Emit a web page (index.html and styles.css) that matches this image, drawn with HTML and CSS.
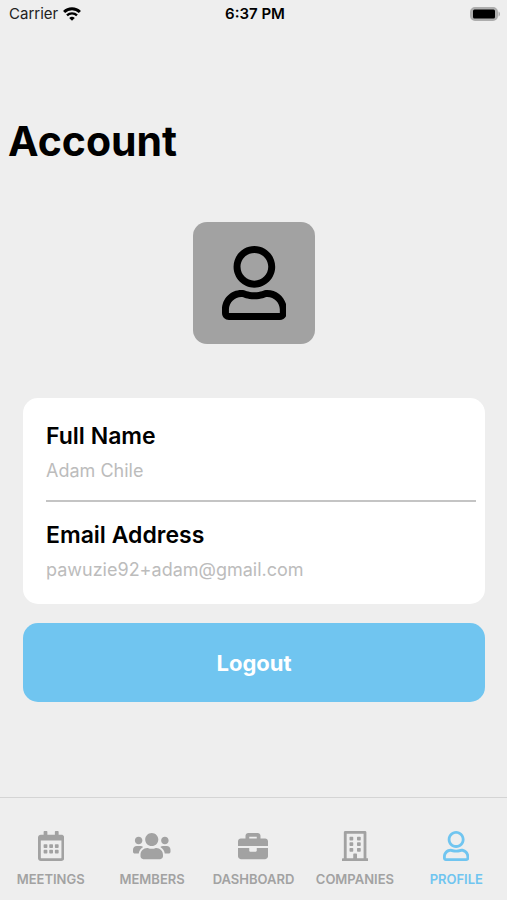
FILE: index.html
```html
<!DOCTYPE html>
<html lang="en">
<head>
    <meta charset="UTF-8">
    <meta name="viewport" content="width=device-width, initial-scale=1.0">
    <title>Account</title>
    <link rel="stylesheet" href="styles.css">
</head>
<body>
    <div class="status-bar">
        <div class="carrier">
            <span>Carrier</span>
            <svg class="wifi" viewBox="0 0 18 14" aria-hidden="true">
                <path d="M1.1 5a11.2 11.2 0 0 1 15.8 0" fill="none" stroke="currentColor" stroke-width="3"/>
                <path d="M4 8.4a7.2 7.2 0 0 1 10 0" fill="none" stroke="currentColor" stroke-width="2.4"/>
                <path d="M9 13.8 6.2 11a4 4 0 0 1 5.6 0z" fill="currentColor"/>
            </svg>
        </div>
        <div class="time">6:37 PM</div>
        <svg class="battery" viewBox="0 0 31 14" aria-hidden="true">
            <rect x="1" y="1" width="26" height="12" rx="4" fill="#adadad" stroke="#adadad" stroke-width="2"/>
            <rect x="3" y="2.5" width="22" height="9" rx="1.5" fill="#000"/>
            <path d="M28.5 4.5c2 .6 2 4.4 0 5z" fill="#adadad"/>
        </svg>
    </div>

    <main class="account">
        <h1>Account</h1>

        <div class="avatar">
            <svg viewBox="0 0 448 512" role="img" aria-label="Profile picture">
                <path d="M313.6 304c-28.7 0-42.5 16-89.6 16-47.1 0-60.8-16-89.6-16C60.2 304 0 364.2 0 438.4V464c0 26.5 21.5 48 48 48h352c26.5 0 48-21.5 48-48v-25.6c0-74.2-60.2-134.4-134.4-134.4zM400 464H48v-25.6c0-47.6 38.8-86.4 86.4-86.4 14.6 0 38.3 16 89.6 16 51.7 0 74.9-16 89.6-16 47.6 0 86.4 38.8 86.4 86.4V464zM224 288c79.5 0 144-64.5 144-144S303.5 0 224 0 80 64.5 80 144s64.5 144 144 144zm0-240c52.9 0 96 43.1 96 96s-43.1 96-96 96-96-43.1-96-96 43.1-96 96-96z"/>
            </svg>
        </div>

        <dl class="card">
            <div class="field">
                <dt>Full Name</dt>
                <dd>Adam Chile</dd>
            </div>
            <div class="field">
                <dt>Email Address</dt>
                <dd>pawuzie92+adam@gmail.com</dd>
            </div>
        </dl>

        <button type="button" class="logout">Logout</button>
    </main>

    <nav class="tab-bar">
        <a href="#meetings" class="tab">
            <svg viewBox="0 0 448 512" aria-hidden="true">
                <path d="M148 288h-40c-6.6 0-12-5.4-12-12v-40c0-6.6 5.4-12 12-12h40c6.6 0 12 5.4 12 12v40c0 6.6-5.4 12-12 12zm108-12v-40c0-6.6-5.4-12-12-12h-40c-6.6 0-12 5.4-12 12v40c0 6.6 5.4 12 12 12h40c6.6 0 12-5.4 12-12zm96 0v-40c0-6.6-5.4-12-12-12h-40c-6.6 0-12 5.4-12 12v40c0 6.6 5.4 12 12 12h40c6.6 0 12-5.4 12-12zm-96 96v-40c0-6.6-5.4-12-12-12h-40c-6.6 0-12 5.4-12 12v40c0 6.6 5.4 12 12 12h40c6.6 0 12-5.4 12-12zm-96 0v-40c0-6.6-5.4-12-12-12h-40c-6.6 0-12 5.4-12 12v40c0 6.6 5.4 12 12 12h40c6.6 0 12-5.4 12-12zm192 0v-40c0-6.6-5.4-12-12-12h-40c-6.6 0-12 5.4-12 12v40c0 6.6 5.4 12 12 12h40c6.6 0 12-5.4 12-12zm96-260v352c0 26.5-21.5 48-48 48H48c-26.5 0-48-21.5-48-48V112c0-26.5 21.5-48 48-48h48V12c0-6.6 5.4-12 12-12h40c6.6 0 12 5.4 12 12v52h128V12c0-6.6 5.4-12 12-12h40c6.6 0 12 5.4 12 12v52h48c26.5 0 48 21.5 48 48zm-48 346V160H48v298c0 3.3 2.7 6 6 6h340c3.3 0 6-2.7 6-6z"/>
            </svg>
            <span>MEETINGS</span>
        </a>
        <a href="#members" class="tab">
            <svg viewBox="0 0 640 512" aria-hidden="true">
                <path d="M96 224c35.3 0 64-28.7 64-64s-28.7-64-64-64-64 28.7-64 64 28.7 64 64 64zm448 0c35.3 0 64-28.7 64-64s-28.7-64-64-64-64 28.7-64 64 28.7 64 64 64zm32 32h-64c-17.6 0-33.5 7.1-45.1 18.6 40.3 22.1 68.9 62 75.1 109.4h66c17.7 0 32-14.3 32-32v-32c0-35.3-28.7-64-64-64zm-256 0c61.9 0 112-50.1 112-112S381.9 32 320 32 208 82.1 208 144s50.1 112 112 112zm76.8 32h-8.3c-20.8 10-43.9 16-68.5 16s-47.6-6-68.5-16h-8.3C179.6 288 128 339.6 128 403.2V432c0 26.5 21.5 48 48 48h288c26.5 0 48-21.5 48-48v-28.8c0-63.6-51.6-115.2-115.2-115.2zm-223.7-13.4C161.5 263.1 145.6 256 128 256H64c-35.3 0-64 28.7-64 64v32c0 17.7 14.3 32 32 32h65.9c6.3-47.4 34.9-87.3 75.2-109.4z"/>
            </svg>
            <span>MEMBERS</span>
        </a>
        <a href="#dashboard" class="tab">
            <svg viewBox="0 0 512 512" aria-hidden="true">
                <path d="M320 336c0 8.84-7.16 16-16 16h-96c-8.84 0-16-7.16-16-16v-48H0v144c0 25.6 22.4 48 48 48h416c25.6 0 48-22.4 48-48V288H320v48zm144-208h-80V80c0-25.6-22.4-48-48-48H176c-25.6 0-48 22.4-48 48v48H48c-25.6 0-48 22.4-48 48v80h512v-80c0-25.6-22.4-48-48-48zm-144 0H192V96h128v32z"/>
            </svg>
            <span>DASHBOARD</span>
        </a>
        <a href="#companies" class="tab">
            <svg viewBox="0 0 448 512" aria-hidden="true">
                <path d="M128 148v-40c0-6.6 5.4-12 12-12h40c6.6 0 12 5.4 12 12v40c0 6.6-5.4 12-12 12h-40c-6.6 0-12-5.4-12-12zm140 12h40c6.6 0 12-5.4 12-12v-40c0-6.6-5.4-12-12-12h-40c-6.6 0-12 5.4-12 12v40c0 6.6 5.4 12 12 12zm-128 96h40c6.6 0 12-5.4 12-12v-40c0-6.6-5.4-12-12-12h-40c-6.6 0-12 5.4-12 12v40c0 6.6 5.4 12 12 12zm128 0h40c6.6 0 12-5.4 12-12v-40c0-6.6-5.4-12-12-12h-40c-6.6 0-12 5.4-12 12v40c0 6.6 5.4 12 12 12zm-76 84v-40c0-6.6-5.4-12-12-12h-40c-6.6 0-12 5.4-12 12v40c0 6.6 5.4 12 12 12h40c6.6 0 12-5.4 12-12zm76 12h40c6.6 0 12-5.4 12-12v-40c0-6.6-5.4-12-12-12h-40c-6.6 0-12 5.4-12 12v40c0 6.6 5.4 12 12 12zm180 124v36H0v-36c0-6.6 5.4-12 12-12h19.5V24c0-13.3 10.7-24 24-24h337c13.3 0 24 10.7 24 24v440H436c6.6 0 12 5.4 12 12zM79.5 463H192v-67c0-6.6 5.4-12 12-12h40c6.6 0 12 5.4 12 12v67h112.5V49L80 48l-.5 415z"/>
            </svg>
            <span>COMPANIES</span>
        </a>
        <a href="#profile" class="tab active" aria-current="page">
            <svg viewBox="0 0 448 512" aria-hidden="true">
                <path d="M313.6 304c-28.7 0-42.5 16-89.6 16-47.1 0-60.8-16-89.6-16C60.2 304 0 364.2 0 438.4V464c0 26.5 21.5 48 48 48h352c26.5 0 48-21.5 48-48v-25.6c0-74.2-60.2-134.4-134.4-134.4zM400 464H48v-25.6c0-47.6 38.8-86.4 86.4-86.4 14.6 0 38.3 16 89.6 16 51.7 0 74.9-16 89.6-16 47.6 0 86.4 38.8 86.4 86.4V464zM224 288c79.5 0 144-64.5 144-144S303.5 0 224 0 80 64.5 80 144s64.5 144 144 144zm0-240c52.9 0 96 43.1 96 96s-43.1 96-96 96-96-43.1-96-96 43.1-96 96-96z"/>
            </svg>
            <span>PROFILE</span>
        </a>
    </nav>
</body>
</html>
```
FILE: styles.css
```css
* {
    box-sizing: border-box;
}
body {
    margin: 0;
    min-height: 100vh;
    display: flex;
    flex-direction: column;
    background-color: #eeeeee;
    color: #000;
    font-family: Inter, sans-serif;
}

/* Status bar */
.status-bar {
    display: grid;
    grid-template-columns: 1fr auto 1fr;
    align-items: center;
    height: 27px;
    padding: 0 6px 0 9px;
    font-size: 15px;
    line-height: 20px;
}
.carrier {
    display: flex;
    align-items: center;
    gap: 5px;
    color: #222;
}
.wifi {
    width: 18px;
    height: 14px;
    color: #000;
}
.time {
    font-weight: 600;
}
.battery {
    width: 31px;
    height: 14px;
    justify-self: end;
}

/* Account */
.account {
    flex: 1;
    display: flex;
    flex-direction: column;
    padding: 84px 22px 24px 23px;
}
h1 {
    margin: 0 0 51px -15px;
    font-size: 41px;
    line-height: 60px;
    font-weight: 700;
}
.avatar {
    display: flex;
    align-items: center;
    justify-content: center;
    align-self: center;
    width: 122px;
    height: 122px;
    margin-bottom: 54px;
    border-radius: 14px;
    background-color: #a2a2a2;
}
.avatar svg {
    height: 74px;
}
.card {
    margin: 0 0 19px;
    padding: 0 9px 0 23px;
    border-radius: 15px;
    background-color: #fff;
}
.field {
    padding: 21px 0 15px;
}
.field + .field {
    border-top: 2px solid #c4c4c4;
    padding-top: 16px;
    padding-bottom: 20px;
}
.field dt {
    font-size: 23px;
    line-height: 34px;
    font-weight: 600;
}
.field dd {
    margin: 0;
    padding-top: 4px;
    color: #bcbcbc;
    font-size: 18px;
    line-height: 28px;
    font-weight: 400;
}
.logout {
    height: 79px;
    border: none;
    border-radius: 15px;
    background-color: #70c5f0;
    color: #fff;
    font-family: inherit;
    font-size: 22px;
    font-weight: 700;
    cursor: pointer;
}

/* Tab bar */
.tab-bar {
    display: grid;
    grid-template-columns: repeat(5, 1fr);
    padding: 33px 0 11px;
    border-top: 1px solid #d4d4d4;
}
.tab {
    display: flex;
    flex-direction: column;
    align-items: center;
    gap: 8px;
    color: #a2a2a2;
    font-size: 13px;
    line-height: 20px;
    font-weight: 600;
    text-decoration: none;
}
.tab svg {
    height: 30px;
}
.tab.active {
    color: #70c5f0;
}
.avatar svg,
.tab svg {
    fill: currentColor;
}
```
